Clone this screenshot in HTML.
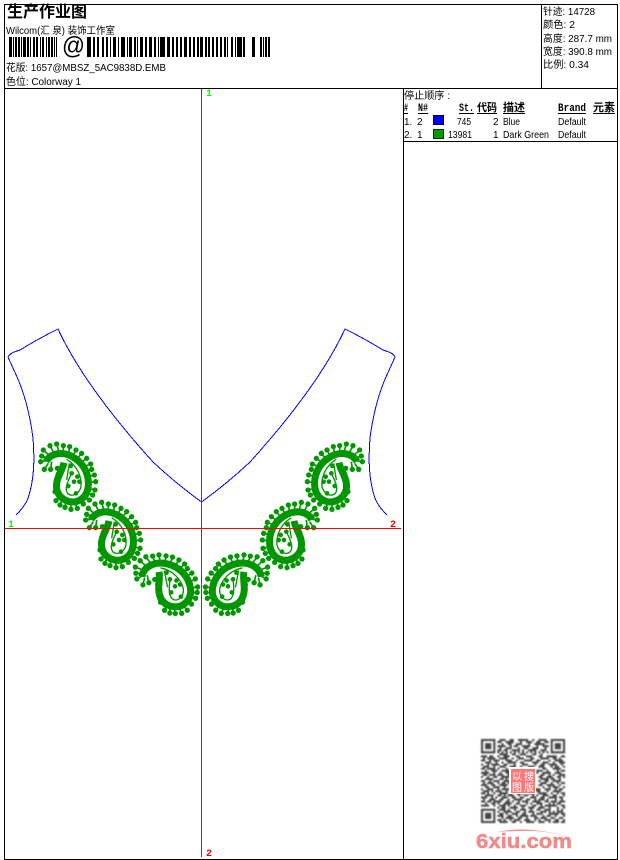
<!DOCTYPE html>
<html>
<head>
<meta charset="utf-8">
<style>
html,body{margin:0;padding:0;background:#fff;width:620px;height:860px;overflow:hidden}
svg{display:block}
text{font-family:"Liberation Sans","WenQuanYi Zen Hei","Noto Sans CJK SC",sans-serif;font-size:10px;fill:#000}
.m{font-family:"Liberation Mono","WenQuanYi Zen Hei","Noto Sans CJK SC",monospace;font-weight:bold;font-size:11px}
.n{font-family:"Liberation Mono",monospace;font-weight:bold;font-size:10px}
</style>
</head>
<body>
<svg xmlns="http://www.w3.org/2000/svg" width="620" height="860" viewBox="0 0 620 860">
<defs>
<g id="p">
<path fill="none" stroke="#009600" stroke-width="21" d="M138 94C155 65 195 64 225 85C255 105 270 140 264 175C257 210 225 224 197 211C172 199 165 175 172 150C178 130 188 118 192 98"/>
<path fill="none" stroke="#009600" stroke-width="4" d="M200 88C232 108 246 140 243 170C238 192 216 202 203 190C192 176 205 150 215 130M208 100L200 150"/>
<path fill="none" stroke="#009600" stroke-width="5" d="M122 95L140 92M125 78L145 85M130 60L150 78M150 47L162 70M170 42L177 66M190 47L190 68M209 50L205 72M228 60L218 78M245 70L230 88M260 85L242 98M272 102L252 110M275 118L258 125M283 135L262 140M287 155L265 158M285 180L264 175M278 195L258 190M268 210L250 200M250 222L238 210M232 235L225 218M213 238L212 220M195 232L198 214M180 225L187 208M168 212L178 200M165 185L172 182M133 118L145 100M152 118L155 95"/>
<path fill="none" stroke="#009600" stroke-width="16" stroke-linecap="round" d="M122 95l0 .01M125 78l0 .01M130 60l0 .01M150 47l0 .01M170 42l0 .01M190 47l0 .01M209 50l0 .01M228 60l0 .01M245 70l0 .01M260 85l0 .01M272 102l0 .01M275 118l0 .01M283 135l0 .01M287 155l0 .01M285 180l0 .01M278 195l0 .01M268 210l0 .01M250 222l0 .01M232 235l0 .01M213 238l0 .01M195 232l0 .01M180 225l0 .01M168 212l0 .01M165 185l0 .01M133 118l0 .01M152 118l0 .01M172 115l0 .01M175 132l0 .01"/>
<path fill="none" stroke="#009600" stroke-width="14" stroke-linecap="round" d="M212 108l0 .01M232 140l0 .01M222 155l0 .01M238 155l0 .01M205 168l0 .01M228 190l0 .01M215 130l0 .01"/>
</g>
<g id="half">
<path fill="none" stroke="#0000ff" stroke-width="1" shape-rendering="crispEdges" d="M16 515C22 509 27 503 29 495C33 482 35 462 33 438C30 415 25 395 17 377L8 357C10 353 14 352 20 350L30 344L37 340L50 333L58 329C78 372 115 420 153 462C170 478 185 490 201.5 502"/>
<g transform="scale(.33333) translate(0,1290)">
<use href="#p"/>
<use href="#p" transform="translate(135,175)"/>
<use href="#p" transform="translate(299,321) rotate(-20 204 140)"/>
</g>
</g>
</defs>

<!-- frame -->
<g fill="#000" shape-rendering="crispEdges">
<rect x="4" y="4" width="614" height="1"/>
<rect x="4" y="88" width="614" height="1"/>
<rect x="4" y="859" width="614" height="1"/>
<rect x="4" y="4" width="1" height="856"/>
<rect x="617" y="4" width="1" height="856"/>
<rect x="541" y="4" width="1" height="84"/>
<rect x="403" y="88" width="1" height="771"/>
<rect x="403" y="141" width="214" height="1"/>
</g>

<!-- header text -->
<text x="7" y="17" textLength="80" lengthAdjust="spacingAndGlyphs" style="font-size:16px;font-weight:bold">生产作业图</text>
<text x="6" y="34" textLength="109" lengthAdjust="spacingAndGlyphs">Wilcom(汇 泉) 装饰工作室</text>
<g fill="#000" shape-rendering="crispEdges">
<path d="M9 37h3v20h-3zM13 37h1v20h-1zM15 37h2v20h-2zM18 37h2v20h-2zM21 37h1v20h-1zM23 37h3v20h-3zM27 37h2v20h-2zM30 37h1v20h-1zM33 37h2v20h-2zM36 37h2v20h-2zM40 37h1v20h-1zM42 37h2v20h-2zM46 37h1v20h-1zM48 37h2v20h-2zM51 37h2v20h-2zM54 37h1v20h-1zM56 37h1v20h-1z"/>
<path d="M87 37h4v20h-4zM93 37h2v20h-2zM97 37h2v20h-2zM102 37h2v20h-2zM106 37h2v20h-2zM110 37h1v20h-1zM113 37h3v20h-3zM118 37h1v20h-1zM121 37h4v20h-4zM127 37h1v20h-1zM129 37h3v20h-3zM134 37h2v20h-2zM137 37h1v20h-1z"/>
<path d="M140 37h3v20h-3zM145 37h2v20h-2zM149 37h3v20h-3zM154 37h2v20h-2zM158 37h1v20h-1zM160 37h5v20h-5zM167 37h3v20h-3zM172 37h2v20h-2zM176 37h2v20h-2zM180 37h2v20h-2zM184 37h3v20h-3zM189 37h2v20h-2zM193 37h2v20h-2zM197 37h2v20h-2zM200 37h3v20h-3zM205 37h2v20h-2zM208 37h2v20h-2zM212 37h2v20h-2zM216 37h2v20h-2zM220 37h2v20h-2zM224 37h2v20h-2zM227 37h1v20h-1zM231 37h2v20h-2zM235 37h1v20h-1zM237 37h5v20h-5zM243 37h2v20h-2zM252 37h3v20h-3zM260 37h2v20h-2zM263 37h1v20h-1zM265 37h2v20h-2zM268 37h2v20h-2z"/>
</g>
<text x="62" y="54" textLength="23" lengthAdjust="spacingAndGlyphs" style="font-size:25px">@</text>
<text x="6" y="71" textLength="160" lengthAdjust="spacingAndGlyphs">花版: 1657@MBSZ_5AC9838D.EMB</text>
<text x="6" y="85" textLength="75" lengthAdjust="spacingAndGlyphs">色位: Colorway 1</text>

<!-- stats -->
<text x="543" y="15" textLength="52" lengthAdjust="spacingAndGlyphs">针迹: 14728</text>
<text x="543" y="28" textLength="32" lengthAdjust="spacingAndGlyphs">颜色: 2</text>
<text x="543" y="42" textLength="69" lengthAdjust="spacingAndGlyphs">高度: 287.7 mm</text>
<text x="543" y="55" textLength="69" lengthAdjust="spacingAndGlyphs">宽度: 390.8 mm</text>
<text x="543" y="68" textLength="46" lengthAdjust="spacingAndGlyphs">比例: 0.34</text>

<!-- legend -->
<text x="404" y="99" textLength="46" lengthAdjust="spacingAndGlyphs">停止顺序 :</text>
<g>
<text class="m" x="404" y="111" textLength="4" lengthAdjust="spacingAndGlyphs">#</text>
<text class="m" x="418" y="111" textLength="10" lengthAdjust="spacingAndGlyphs">N#</text>
<text class="m" x="459" y="111" textLength="15" lengthAdjust="spacingAndGlyphs">St.</text>
<text class="m" x="477" y="111" textLength="20" lengthAdjust="spacingAndGlyphs">代码</text>
<text class="m" x="503" y="111" textLength="22" lengthAdjust="spacingAndGlyphs">描述</text>
<text class="m" x="558" y="111" textLength="28" lengthAdjust="spacingAndGlyphs">Brand</text>
<text class="m" x="593" y="111" textLength="22" lengthAdjust="spacingAndGlyphs">元素</text>
</g>
<g fill="#000" shape-rendering="crispEdges">
<rect x="404" y="113" width="4" height="1"/>
<rect x="418" y="113" width="10" height="1"/>
<rect x="459" y="113" width="15" height="1"/>
<rect x="477" y="113" width="20" height="1"/>
<rect x="503" y="113" width="22" height="1"/>
<rect x="558" y="113" width="28" height="1"/>
<rect x="593" y="113" width="22" height="1"/>
</g>
<text x="404" y="125">1.</text>
<text x="417" y="125">2</text>
<rect x="433.500" y="115.500" width="10" height="9" fill="#0000ff" stroke="#003" shape-rendering="crispEdges"/>
<text x="457" y="125" textLength="14" lengthAdjust="spacingAndGlyphs">745</text>
<text x="493" y="125">2</text>
<text x="503" y="125" textLength="17" lengthAdjust="spacingAndGlyphs">Blue</text>
<text x="558" y="125" textLength="28" lengthAdjust="spacingAndGlyphs">Default</text>
<text x="404" y="138">2.</text>
<text x="417" y="138">1</text>
<rect x="433.500" y="129.500" width="10" height="9" fill="#009900" stroke="#030" shape-rendering="crispEdges"/>
<text x="448" y="138" textLength="24" lengthAdjust="spacingAndGlyphs">13981</text>
<text x="493" y="138">1</text>
<text x="503" y="138" textLength="46" lengthAdjust="spacingAndGlyphs">Dark Green</text>
<text x="558" y="138" textLength="28" lengthAdjust="spacingAndGlyphs">Default</text>

<!-- embroidery -->
<use href="#half"/>
<use href="#half" transform="translate(403,0) scale(-1,1)"/>

<!-- axes -->
<g fill="#ff0000" shape-rendering="crispEdges">
<rect x="201" y="89" width="1" height="768"/>
<rect x="5" y="528" width="396" height="1"/>
</g>
<text class="n" x="206" y="96" style="fill:#00ff00">1</text>
<text class="n" x="206" y="856" style="fill:#ff0000">2</text>
<text class="n" x="8" y="527" style="fill:#00ff00">1</text>
<text class="n" x="390" y="527" style="fill:#ff0000">2</text>

<!-- QR -->
<g transform="translate(481,739) scale(2.05)" style="filter:blur(.35px)">
<path fill="#444" fill-rule="evenodd" d="M0 0h7v7h-7zM1 1v5h5v-5zM2 2h3v3h-3zM34 0h7v7h-7zM35 1v5h5v-5zM36 2h3v3h-3zM0 34h7v7h-7zM1 35v5h5v-5zM2 36h3v3h-3z"/>
<path fill="none" stroke="#444" stroke-width="1" d="
M9 .5h3M14 .5h2M18 .5h5M25 .5h1M28 .5h4
M8 1.500h2M12 1.500h4M19 1.500h1M22 1.500h3M27 1.500h2M31 1.500h2
M10 2.500h1M13 2.500h2M17 2.500h3M23 2.500h1M26 2.500h5
M8 3.500h4M14 3.500h1M16 3.500h2M20 3.500h4M27 3.500h1M30 3.500h3
M9 4.500h1M12 4.500h3M18 4.500h1M21 4.500h2M25 4.500h3M31 4.500h1
M8 5.500h2M11 5.500h2M15 5.500h4M20 5.500h1M23 5.500h4M29 5.500h3
M8 6.500h1M10 6.500h1M12 6.500h1M14 6.500h1M16 6.500h1M18 6.500h1M20 6.500h1M22 6.500h1M24 6.500h1M26 6.500h1M28 6.500h1M30 6.500h1M32 6.500h1
M9 7.500h4M15 7.500h2M19 7.500h3M25 7.500h2M29 7.500h1
M0 8.500h3M4 8.500h2M8 8.500h1M11 8.500h3M17 8.500h2M22 8.500h3M28 8.500h2M32 8.500h5M39 8.500h2
M1 9.500h1M3 9.500h4M9 9.500h4M15 9.500h1M18 9.500h3M24 9.500h2M29 9.500h4M35 9.500h2M38 9.500h1
M0 10.500h2M4 10.500h1M6 10.500h3M12 10.500h3M17 10.500h1M21 10.500h4M27 10.500h2M33 10.500h1M36 10.500h4
M2 11.500h3M7 11.500h1M10 11.500h1M13 11.500h4M19 11.500h2M25 11.500h3M30 11.500h3M35 11.500h1M38 11.500h3
M0 12.500h1M3 12.500h1M5 12.500h4M11 12.500h2M16 12.500h1M20 12.500h3M26 12.500h1M29 12.500h2M33 12.500h4M39 12.500h1
M1 13.500h3M6 13.500h1M9 13.500h3M14 13.500h3M19 13.500h1M23 13.500h3M28 13.500h3M34 13.500h1M36 13.500h2M40 13.500h1
M0 14.500h2M3 14.500h4M8 14.500h1M12 14.500h1M15 14.500h2M18 14.500h4M25 14.500h1M30 14.500h2M35 14.500h4
M2 15.500h1M5 15.500h3M10 15.500h4M17 15.500h2M22 15.500h2M27 15.500h3M32 15.500h1M37 15.500h1M39 15.500h2
M0 16.500h4M6 16.500h1M9 16.500h1M12 16.500h3M27 16.500h1M30 16.500h4M36 16.500h3
M1 17.500h2M4 17.500h3M8 17.500h3M13 17.500h1M29 17.500h2M33 17.500h1M35 17.500h1M38 17.500h3
M0 18.500h1M3 18.500h1M6 18.500h2M10 18.500h4M28 18.500h2M32 18.500h3M37 18.500h2M40 18.500h1
M2 19.500h4M9 19.500h2M12 19.500h1M29 19.500h4M34 19.500h2M38 19.500h1
M0 20.500h2M4 20.500h1M6 20.500h3M11 20.500h3M28 20.500h1M31 20.500h2M35 20.500h4
M1 21.500h1M3 21.500h3M8 21.500h1M10 21.500h2M13 21.500h1M29 21.500h3M34 21.500h1M37 21.500h1M39 21.500h2
M0 22.500h3M5 22.500h2M9 22.500h4M28 22.500h2M32 22.500h4M38 22.500h1
M2 23.500h2M6 23.500h3M11 23.500h1M14 23.500h1M30 23.500h1M33 23.500h1M35 23.500h3M40 23.500h1
M0 24.500h1M3 24.500h3M8 24.500h1M10 24.500h4M16 24.500h3M21 24.500h2M25 24.500h4M31 24.500h3M36 24.500h1M38 24.500h2
M1 25.500h3M5 25.500h1M7 25.500h3M12 25.500h1M15 25.500h2M19 25.500h3M24 25.500h1M27 25.500h2M32 25.500h1M35 25.500h4
M0 26.500h2M3 26.500h1M6 26.500h1M9 26.500h4M14 26.500h1M17 26.500h4M23 26.500h3M28 26.500h4M34 26.500h1M37 26.500h1M39 26.500h2
M2 27.500h4M8 27.500h2M11 27.500h1M13 27.500h3M18 27.500h1M21 27.500h2M25 27.500h1M27 27.500h1M30 27.500h3M35 27.500h2M40 27.500h1
M0 28.500h3M5 28.500h1M7 28.500h1M10 28.500h3M15 28.500h2M19 28.500h2M24 28.500h3M29 28.500h2M33 28.500h4M38 28.500h2
M1 29.500h1M4 29.500h3M9 29.500h2M13 29.500h1M16 29.500h4M22 29.500h2M26 29.500h1M28 29.500h3M32 29.500h1M36 29.500h1M39 29.500h1
M0 30.500h2M3 30.500h2M6 30.500h4M12 30.500h2M15 30.500h1M18 30.500h1M20 30.500h3M25 30.500h4M31 30.500h2M34 30.500h3M38 30.500h3
M2 31.500h1M5 31.500h2M8 31.500h1M11 31.500h4M17 31.500h2M22 31.500h1M24 31.500h1M27 31.500h3M33 31.500h1M35 31.500h1M37 31.500h2
M0 32.500h4M6 32.500h1M9 32.500h3M13 32.500h1M16 32.500h1M19 32.500h3M25 32.500h2M29 32.500h1M31 32.500h6M39 32.500h2
M8 33.500h1M10 33.500h2M14 33.500h4M20 33.500h1M23 33.500h3M28 33.500h3M33 33.500h1M37 33.500h1M40 33.500h1
M9 34.500h3M13 34.500h1M16 34.500h1M19 34.500h3M24 34.500h1M27 34.500h2M31 34.500h2M33 34.500h1M37 34.500h1M39 34.500h1
M8 35.500h1M11 35.500h4M17 35.500h2M21 35.500h1M23 35.500h3M29 35.500h3M33 35.500h1M35 35.500h1M37 35.500h3
M9 36.500h2M12 36.500h1M15 36.500h3M20 36.500h2M25 36.500h1M27 36.500h3M33 36.500h5M39 36.500h2
M8 37.500h3M13 37.500h2M17 37.500h1M19 37.500h4M24 37.500h3M30 37.500h1M32 37.500h2M36 37.500h1M40 37.500h1
M10 38.500h1M12 38.500h4M18 38.500h2M22 38.500h1M26 38.500h2M29 38.500h3M34 38.500h2M38 38.500h2
M8 39.500h2M11 39.500h1M14 39.500h1M16 39.500h3M21 39.500h3M26 39.500h1M28 39.500h1M31 39.500h3M36 39.500h2M40 39.500h1
M9 40.500h4M15 40.500h2M19 40.500h1M22 40.500h4M28 40.500h3M33 40.500h1M35 40.500h3M39 40.500h2"/>
</g>
<rect x="509" y="767" width="27" height="27" fill="#fff"/>
<rect x="511" y="769" width="24" height="24" fill="#f77"/>
<g style="fill:#fff" text-anchor="middle">
<text x="517" y="780" style="font-size:10px;fill:#fff">以</text>
<text x="529" y="780" style="font-size:10px;fill:#fff">搜</text>
<text x="517" y="791" style="font-size:10px;fill:#fff">图</text>
<text x="529" y="791" style="font-size:10px;fill:#fff">版</text>
</g>

<!-- logo -->
<path d="M497 832Q530 825 572 838Q545 830 525 831Q510 831 497 832z" fill="#f29090"/>
<text x="476" y="848" textLength="96" lengthAdjust="spacingAndGlyphs" style="font-size:20px;font-weight:bold;fill:#f28a8a;stroke:#f28a8a;stroke-width:.5px">6xiu.com</text>
</svg>
</body>
</html>
